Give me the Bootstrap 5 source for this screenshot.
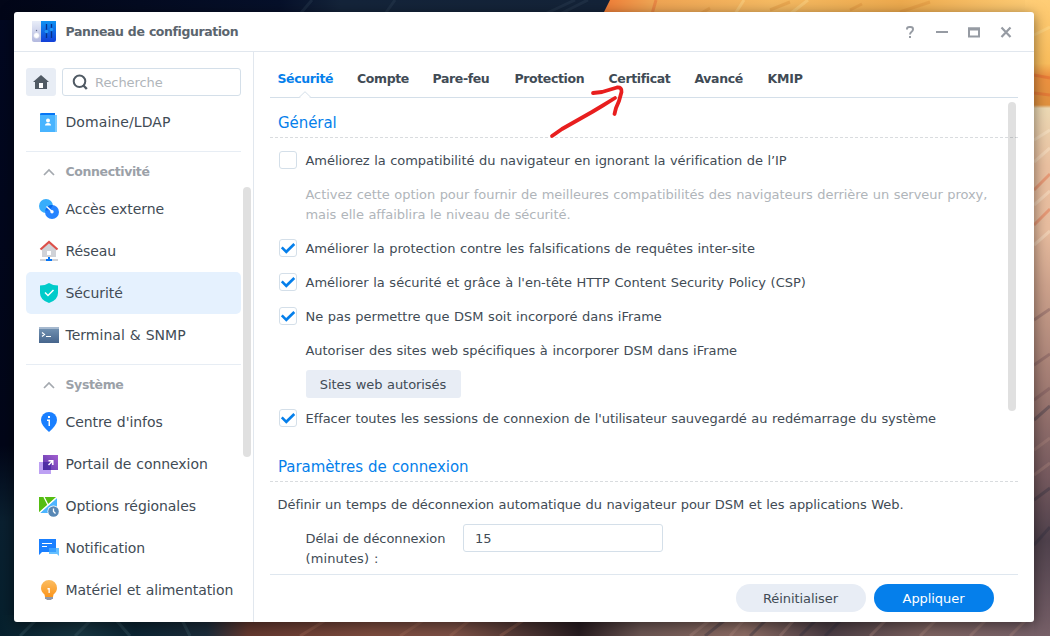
<!DOCTYPE html>
<html lang="fr">
<head>
<meta charset="utf-8">
<meta name="viewport" content="width=device-width, initial-scale=1">
<title>Panneau de configuration</title>
<link href="https://cdn.jsdelivr.net/npm/bootstrap@5.3.0/dist/css/bootstrap.min.css" rel="stylesheet">
<style>
body{width:1050px;height:636px;overflow:hidden;background:#020618;font-family:Verdana,"DejaVu Sans",sans-serif;font-size:13px;line-height:20px;color:#414b55;letter-spacing:-.065px;word-spacing:.5px}
.wallpaper{position:absolute;inset:0;z-index:-1}
.desk{padding:12px 16px 14px 14px;height:636px}
.window{height:610px;border-radius:3px;box-shadow:0 3px 14px rgba(0,0,0,.5)}
.titlebar{height:40px;border-bottom:1px solid #e1e7ee;padding:0 20px 0 18px}
.titlebar h1{font-size:12.5px;letter-spacing:-.42px;line-height:20px;color:#5b656e;margin:0 0 0 9.5px}
.side{width:240px;border-right:1px solid #e1e7ee;padding:16px 12px 0}
.home{width:30px;height:28px;background:#e8edf5;border-radius:3px}
.search{height:28px;border:1px solid #d4dfe9;border-radius:3px;padding-left:9px}
.search span{font-size:13px;color:#b0b5ba;margin-left:7px;padding-top:2px}
.menu-item{height:42px;padding-left:12px;font-size:14px;color:#414b55;border-radius:5px;width:215px;white-space:nowrap}
.menu-item svg{width:22px;height:22px;flex:none;margin-right:5.5px}
.menu-item.current{background:#e5f1fe}
.sep{height:1px;background:#e7edf4;margin-top:8px}
.group{height:36px;padding:3px 0 0 16px;color:#9ba1a8;font-weight:700;font-size:12.5px;letter-spacing:-.38px}
.group svg{margin-right:9.5px}
.thumb{position:absolute;width:8px;border-radius:4px;background:rgba(0,0,0,.12)}
.pane{padding:0 16px}
.tabs{height:46px;border-bottom:1px solid #d4dfe9;padding:6px 0 0 7.5px;font-weight:700;font-size:12.5px;letter-spacing:-.38px;position:relative}
.tabs a{color:#414b55;text-decoration:none;height:40px;line-height:41px;white-space:nowrap}
.tabs a.on{color:#057feb}
.notch{position:absolute;left:29px;bottom:-1px}
.sect{font-size:15px;color:#057feb;height:32px;line-height:20px;padding:7px 8px 0;background:repeating-linear-gradient(90deg,#d9dcdf 0 3px,transparent 3px 5px) 0 100%/100% 1px no-repeat}
.opt{height:28px;padding:2px 0 0 9px;white-space:nowrap}
.box{width:18px;height:18px;border:1px solid #d4dfe9;border-radius:3px;margin:-2px 8.5px 0 0;flex:none}
.help{color:#b0b5ba;padding-left:35.5px;white-space:nowrap}
.grey-btn{background:#e8edf5;color:#414b55;height:28px;border-radius:3px;white-space:nowrap;padding:2px 1px 0 0}
.pill{height:28px;border-radius:14px}
.pill.apply{width:120px;background:#057feb;padding:2px 1px 0 0}
.field{width:200px;height:28px;border:1px solid #d4dfe9;border-radius:3px;padding:4px 11px;line-height:20px}
.foot{height:48px;border-top:1px solid #dfe7ef;padding:0 24px 1px 0}
.pen{position:absolute;left:545px;top:82px}
</style>
</head>
<body>
<svg class="wallpaper" width="1050" height="636" viewBox="0 0 1050 636">
<defs>
<linearGradient id="lf" x2="0" y2="1"><stop stop-color="#020821"/><stop offset=".7" stop-color="#020618"/><stop offset=".82" stop-color="#0a2030"/><stop offset="1" stop-color="#06202d"/></linearGradient>
<linearGradient id="tp"><stop stop-color="#020618"/><stop offset=".45" stop-color="#06102a"/><stop offset=".55" stop-color="#14243a"/><stop offset="1" stop-color="#142338"/></linearGradient>
<linearGradient id="og"><stop stop-color="#ef7a35"/><stop offset=".12" stop-color="#efa453"/><stop offset=".4" stop-color="#f5ba62"/><stop offset=".7" stop-color="#edaa4e"/><stop offset="1" stop-color="#fdcb74"/></linearGradient>
<linearGradient id="rt" x2="0" y2="1"><stop stop-color="#ffcd76"/><stop offset=".1" stop-color="#f9bd5c"/><stop offset=".12" stop-color="#ed9140"/><stop offset=".165" stop-color="#e0913f"/><stop offset=".17" stop-color="#ecd9b4"/><stop offset=".26" stop-color="#eac0a0"/><stop offset=".36" stop-color="#e8bd9f"/><stop offset=".45" stop-color="#cda28c"/><stop offset=".6" stop-color="#a37d74"/><stop offset=".75" stop-color="#75595e"/><stop offset=".85" stop-color="#4f414c"/><stop offset="1" stop-color="#776068"/></linearGradient>
<linearGradient id="bt"><stop stop-color="#06202d"/><stop offset=".08" stop-color="#173440"/><stop offset=".13" stop-color="#0b2432"/><stop offset=".2" stop-color="#1c2c3a"/><stop offset=".24" stop-color="#64382f"/><stop offset=".36" stop-color="#7c4b3e"/><stop offset=".44" stop-color="#7c5045"/><stop offset=".52" stop-color="#45302f"/><stop offset=".56" stop-color="#281c20"/><stop offset=".62" stop-color="#6b5552"/><stop offset=".72" stop-color="#8c6b63"/><stop offset=".8" stop-color="#4b3d44"/><stop offset=".9" stop-color="#7d6260"/><stop offset="1" stop-color="#776068"/></linearGradient>
</defs>
<path fill="url(#lf)" d="M0 0H30V636H0z"/>
<path fill="url(#tp)" d="M0 0H620V20H0z"/>
<path fill="url(#og)" d="M610 0H1030V20H600z"/>
<path fill="url(#rt)" d="M1025 0H1050V636H1025z"/>
<path fill="url(#bt)" d="M0 615H1034V636H0z"/>
<g fill="none" stroke-width="3" opacity=".35">
<path stroke="#31455a" d="M300 14l12-14M385 14l10-14M545 14l30-14M560 14l28-14"/>
<path stroke="#e0552b" d="M652 14l4-14M1034 75l16 3M1034 93l16 2M1034 190l16-16M1034 225l16-16"/>
<path stroke="#ffe39a" d="M790 14l18-14M1034 35l16-8M735 14l9-14"/>
<path stroke="#d98a34" d="M700 14l10-6M770 10l20-8M900 12l30-10M850 10l12-6"/>
<path stroke="#fff0d8" d="M1034 140l16-10M1034 162l16-14M1034 205l16-14M1034 245l16-14"/>
<path stroke="#6c4b52" d="M1034 320l16-11M1034 365l16-11M1034 400l16-12"/>
<path stroke="#2c2c3c" d="M1034 420l16-14M1034 500l16-12M1034 545l16-18M705 636l20-16M750 636l16-16M800 636l16-16M825 636l16-16"/>
<path stroke="#b08a80" d="M1034 450l16-12M1034 475l16-12M690 636l20-16M730 636l14-16M780 636l14-16M870 636l16-16M920 636l16-16M970 636l16-16M1010 636l16-16"/>
<path stroke="#a56d58" d="M300 636l26-16M400 636l24-16M450 636l20-16M500 636l24-16"/>
<path stroke="#3f5f6b" d="M20 636l16-16M75 636l16-16M130 636l-14-16M190 636l-8-16"/>
</g>
</svg>

<div class="desk">
<div class="window bg-white d-flex flex-column position-relative">
  <header class="titlebar d-flex align-items-center flex-shrink-0">
    <svg width="24" height="22" viewBox="0 0 24 22" style="margin-top:1px"><defs><linearGradient id="pa" x2="0" y2="1"><stop stop-color="#e8edf8"/><stop offset="1" stop-color="#b3b9df"/></linearGradient><linearGradient id="pb" x2="0" y2="1"><stop stop-color="#0e92f2"/><stop offset="1" stop-color="#123fd8"/></linearGradient></defs><path fill="url(#pa)" d="M0 0h10v21H2q-2 0-2-2z"/><path fill="url(#pb)" d="M9 0h15v19q0 2-2 2H9z"/><path stroke="#06318b" stroke-width="1.300" d="M14.500 3v14M19.500 3v14"/><circle cx="14.500" cy="10.500" r="1.800" fill="#2196f5"/><circle cx="19.500" cy="8.500" r="1.800" fill="#2196f5"/><circle cx="4.500" cy="14.500" r="2.900" fill="#fff" stroke="#c5cae4" stroke-width=".6"/><circle cx="4.500" cy="9.500" r=".7" fill="#636a8c"/></svg>
    <h1 class="fw-bold">Panneau de configuration</h1>
    <svg class="ms-auto" width="112" height="21" viewBox="0 0 112 21" fill="none" stroke="#969ba3" stroke-width="2"><path d="M5 8.500V8Q5 6 7.300 6h1.200Q11 6 11 8.300 11 9.800 9.600 10.800 8 12 8 13.500M8 15v2"/><path d="M34 11h12M67 7.500h10v8H67z"/><path d="M66 8h12" stroke-width="3"/><path d="M99.500 6.500l9 9.500M108.500 6.500l-9 9.500" stroke-width="2.200"/></svg>
  </header>
  <div class="d-flex flex-grow-1" style="min-height:0">
    <aside class="side flex-shrink-0">
      <div class="d-flex" style="gap:6px;margin-bottom:5px">
        <div class="home d-flex align-items-center justify-content-center"><svg width="16" height="14" viewBox="0 0 16 14"><path fill="#505a64" d="M8 0l8 7h-2v7H2V7H0z"/><path fill="#fff" d="M6 8h4v5H6z"/></svg></div>
        <div class="search flex-grow-1 d-flex align-items-center"><svg width="16" height="16" viewBox="0 0 16 16" fill="none" stroke="#505a64"><circle cx="7.500" cy="7.300" r="5.800" stroke-width="2"/><path stroke-width="2.400" d="M11 11l3.800 4"/></svg><span>Recherche</span></div>
      </div>
      <nav>
        <div class="menu-item d-flex align-items-center"><svg viewBox="0 0 22 22"><path fill="#7ccbff" d="M4 4h15v17H4z"/><path fill="#48b4ff" d="M2 3q0-1 1-1h14v19H2z"/><path fill="#0675f5" d="M2 4q0-2 2-2h13v2z"/><circle cx="10" cy="9.500" r="2" fill="#fff"/><path fill="#fff" d="M7 14.500q0-2.500 3-2.500t3 2.500z"/></svg><span style="letter-spacing:.08px">Domaine/LDAP</span></div>
        <div class="sep"></div>
        <div class="group d-flex align-items-center"><svg width="14" height="10" viewBox="0 0 14 10" fill="none" stroke="#a4a9af" stroke-width="1.700"><path d="M2 8l5-5 5 5"/></svg>Connectivité</div>
        <div class="menu-item d-flex align-items-center"><svg viewBox="0 0 22 22"><circle cx="8" cy="8" r="7" fill="#37adfb"/><circle cx="14" cy="14" r="7" fill="#2684ff"/><path fill="#0567ee" d="M7.200 12.500a7 7 0 0 1 7.600-5.400 7 7 0 0 1-7.600 5.400z"/><path stroke="#fff" stroke-width="1.500" d="M8.500 8.500l5 4.500"/><circle cx="14" cy="13.700" r="1.700" fill="#fff"/></svg>Accès externe</div>
        <div class="menu-item d-flex align-items-center"><svg viewBox="0 0 22 22"><path fill="#d0d2d7" d="M4 9l7-6 7 6v8H4zM2 19h18v2H2z"/><path fill="none" stroke="#dc504a" stroke-width="2.200" d="M2.500 9.500L11 2l8.500 7.500"/><path fill="#fff" d="M9 11h4v4H9z"/><path fill="#0675f5" d="M10 17h2v2h2v2H8v-2h2z"/></svg>Réseau</div>
        <div class="menu-item current d-flex align-items-center"><svg viewBox="0 0 22 22"><path fill="#00cbca" d="M11 1q4 2.500 9 2.500V11q0 7-9 10Q2 18 2 11V3.500Q7 3.500 11 1z"/><path fill="none" stroke="#fff" stroke-width="1.500" d="M7 10.500l3 3L15.500 8"/></svg>Sécurité</div>
        <div class="menu-item d-flex align-items-center"><svg viewBox="0 0 22 22"><defs><linearGradient id="tm" x2="0" y2="1"><stop stop-color="#7595b5"/><stop offset="1" stop-color="#46658c"/></linearGradient></defs><path fill="url(#tm)" d="M1 3h20v16H1z"/><path fill="#a6b9cf" d="M1 3h20v2H1z"/><path fill="none" stroke="#fff" stroke-width="1.200" d="M4 8.500L6.500 10.500 4 12.500M8 12.500h5"/></svg><span style="letter-spacing:.02px">Terminal &amp; SNMP</span></div>
        <div class="sep"></div>
        <div class="group d-flex align-items-center"><svg width="14" height="10" viewBox="0 0 14 10" fill="none" stroke="#a4a9af" stroke-width="1.700"><path d="M2 8l5-5 5 5"/></svg>Système</div>
        <div class="menu-item d-flex align-items-center"><svg viewBox="0 0 22 22"><path fill="#197fff" d="M11 1a8 8 0 0 1 8 8q0 5-8 12Q3 14 3 9a8 8 0 0 1 8-8z"/><path fill="#fff" d="M10 5h2v2h-2zM9 8.500h3V15h-1.500v-5H9z"/></svg>Centre d'infos</div>
        <div class="menu-item d-flex align-items-center"><svg viewBox="0 0 22 22"><defs><linearGradient id="po" x1="1" x2="0" y2="1"><stop stop-color="#a35fd0"/><stop offset="1" stop-color="#5a36aa"/></linearGradient></defs><path fill="#bda0f3" d="M1 9h12v12H1z"/><path fill="url(#po)" d="M5 2h15v15H5z"/><path fill="#4228a0" fill-opacity=".7" d="M5 9h8v8H5z"/><path fill="none" stroke="#fff" stroke-width="1.500" d="M10.500 12L14.500 8M10.500 7.700h4.300V12"/></svg>Portail de connexion</div>
        <div class="menu-item d-flex align-items-center"><svg viewBox="0 0 22 22"><path fill="#55bd12" d="M1 2h18L1 18z"/><path fill="#4db5ff" d="M19 3v15H2z"/><path fill="none" stroke="#fff" stroke-width="1.300" d="M1 18L19 2M6 2l4 8"/><circle cx="15.500" cy="16.500" r="6" fill="#fff"/><circle cx="15.500" cy="16.500" r="5.300" fill="#5888b5"/><path fill="none" stroke="#fff" stroke-width="1.300" d="M15.500 13.500v3l2 2"/></svg>Options régionales</div>
        <div class="menu-item d-flex align-items-center"><svg viewBox="0 0 22 22"><path fill="#197fff" d="M1 2h17v13H4l-3 3z"/><path fill="#66c0ff" d="M11 11h10v8l-2-2h-8z"/><path fill="#379fff" d="M11 11h7v4h-7z"/><path stroke="#fff" stroke-width="1.200" d="M4 6.500h10M4 9.500h5"/></svg>Notification</div>
        <div class="menu-item d-flex align-items-center"><svg viewBox="0 0 22 22"><defs><linearGradient id="bu" x2="0" y2="1"><stop stop-color="#fbbd62"/><stop offset="1" stop-color="#fb951b"/></linearGradient></defs><path fill="url(#bu)" d="M11 1a8 8 0 0 1 8 8q0 3.500-3.500 6.500L15 18H7l-.5-2.500Q3 12.500 3 9a8 8 0 0 1 8-8z"/><path fill="#9298a6" d="M7 18h8v2h-1l-1 1H9l-1-1H7z"/><path fill="#fff" d="M9.500 9h2.300v5h-1.300v-3.500h-1z"/></svg>Matériel et alimentation</div>
      </nav>
    </aside>
    <main class="pane flex-grow-1 d-flex flex-column">
      <nav class="tabs d-flex flex-shrink-0">
        <a class="on" href="#" style="width:79.5px">Sécurité</a><a href="#" style="width:75.5px">Compte</a><a href="#" style="width:82px">Pare-feu</a><a href="#" style="width:94px">Protection</a><a href="#" style="width:86px">Certificat</a><a href="#" style="width:73px">Avancé</a><a href="#" style="letter-spacing:-.2px">KMIP</a>
        <svg class="notch" width="12" height="7" viewBox="0 0 12 7"><path fill="#fff" stroke="#d4dfe9" d="M0 6.500L6 .7l6 5.800"/><path stroke="#fff" d="M1.500 6.500h9"/></svg>
      </nav>
      <div class="flex-grow-1 overflow-hidden" style="padding-top:8px">
        <div class="sect">Général</div>
        <div class="opt d-flex align-items-center" style="margin-top:8px;letter-spacing:-.055px"><span class="box"></span>Améliorez la compatibilité du navigateur en ignorant la vérification de l’IP</div>
        <div class="help" style="margin:11px 0 9px;letter-spacing:-.058px">Activez cette option pour fournir de meilleures compatibilités des navigateurs derrière un serveur proxy,<br>mais elle affaiblira le niveau de sécurité.</div>
        <div class="d-flex flex-column" style="gap:6px">
          <div class="opt d-flex align-items-center" style="letter-spacing:-.02px"><span class="box d-flex"><svg width="16" height="16" viewBox="0 0 16 16" fill="none" stroke="#057feb" stroke-width="2.600"><path d="M1.800 7.300l4.500 4.500L14.300 4"/></svg></span>Améliorer la protection contre les falsifications de requêtes inter-site</div>
          <div class="opt d-flex align-items-center" style="letter-spacing:-.008px"><span class="box d-flex"><svg width="16" height="16" viewBox="0 0 16 16" fill="none" stroke="#057feb" stroke-width="2.600"><path d="M1.800 7.300l4.500 4.500L14.300 4"/></svg></span>Améliorer la sécurité et grâce à l'en-tête HTTP Content Security Policy (CSP)</div>
          <div class="opt d-flex align-items-center" style="letter-spacing:-.02px"><span class="box d-flex"><svg width="16" height="16" viewBox="0 0 16 16" fill="none" stroke="#057feb" stroke-width="2.600"><path d="M1.800 7.300l4.500 4.500L14.300 4"/></svg></span>Ne pas permettre que DSM soit incorporé dans iFrame</div>
          <div class="opt d-flex align-items-center" style="padding-left:35.5px;letter-spacing:-.04px">Autoriser des sites web spécifiques à incorporer DSM dans iFrame</div>
          <div class="grey-btn d-flex align-items-center justify-content-center" style="width:155px;margin-left:36px">Sites web autorisés</div>
          <div class="opt d-flex align-items-center"><span class="box d-flex"><svg width="16" height="16" viewBox="0 0 16 16" fill="none" stroke="#057feb" stroke-width="2.600"><path d="M1.800 7.300l4.500 4.500L14.300 4"/></svg></span>Effacer toutes les sessions de connexion de l'utilisateur sauvegardé au redémarrage du système</div>
        </div>
        <div class="sect" style="margin-top:18px">Paramètres de connexion</div>
        <div class="opt d-flex align-items-center" style="margin:8px 0 6px;padding-left:7.5px">Définir un temps de déconnexion automatique du navigateur pour DSM et les applications Web.</div>
        <div class="d-flex" style="padding-left:35.5px"><div style="width:157.5px;padding-top:5px;letter-spacing:-.1px">Délai de déconnexion<br><span style="letter-spacing:.1px">(minutes) :</span></div><div class="field">15</div></div>
      </div>
      <footer class="foot d-flex align-items-center justify-content-end flex-shrink-0" style="gap:8px">
        <div class="grey-btn pill d-flex align-items-center justify-content-center" style="width:130px">Réinitialiser</div>
        <div class="pill apply d-flex align-items-center justify-content-center text-white">Appliquer</div>
      </footer>
    </main>
  </div>
  <div class="thumb" style="left:229px;top:175px;height:270px"></div>
  <div class="thumb" style="left:994px;top:90px;height:309px"></div>
</div>
</div>
<svg class="pen" width="84" height="60" viewBox="0 0 84 60" fill="none" stroke="#e81e1e" stroke-width="3.800" stroke-linecap="round" stroke-linejoin="round"><path d="M7 54L17 47 47 30 57 24 70 16"/><path d="M48 11L57 10 72 5.500Q77 5 76.500 10L74 19 71 26 69.500 32"/></svg>
<script src="https://cdn.jsdelivr.net/npm/bootstrap@5.3.0/dist/js/bootstrap.bundle.min.js"></script>
</body>
</html>
